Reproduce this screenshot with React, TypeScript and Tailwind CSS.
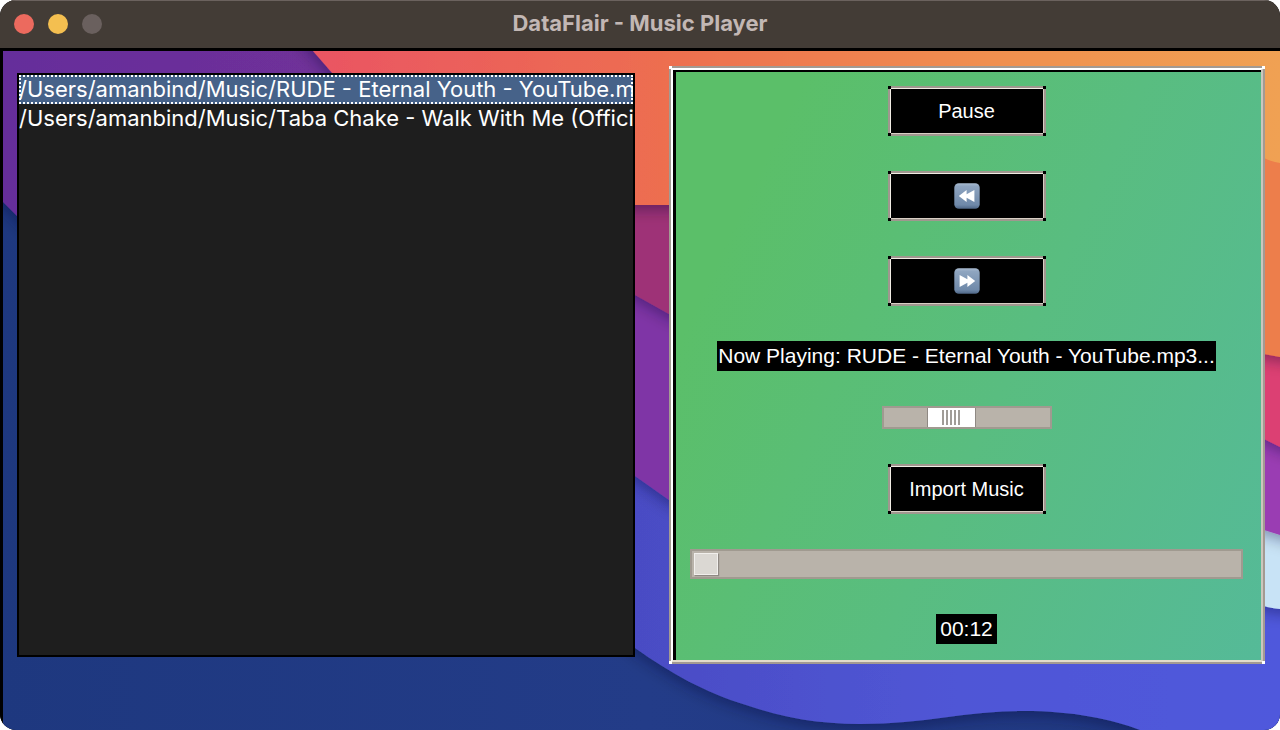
import { useState } from "react";
import type { ReactNode } from "react";

const tracks = [
  "/Users/amanbind/Music/RUDE - Eternal Youth - YouTube.mp3",
  "/Users/amanbind/Music/Taba Chake - Walk With Me (Official Music Video).mp3",
];

function Wallpaper() {
  return (
    <svg
      className="absolute inset-0 h-full w-full"
      viewBox="3 51 1277 679"
      preserveAspectRatio="none"
      aria-hidden="true"
    >
      <defs>
        <linearGradient id="navy" x1="0" x2="1" y1="0" y2="0">
          <stop offset="0" stopColor="#1e387f" />
          <stop offset="0.5" stopColor="#233c88" />
          <stop offset="1" stopColor="#1f3780" />
        </linearGradient>
        <linearGradient id="indigo" gradientUnits="userSpaceOnUse" x1="635" x2="1280" y1="0" y2="0">
          <stop offset="0" stopColor="#4a4cc4" />
          <stop offset="0.5" stopColor="#5056d6" />
          <stop offset="1" stopColor="#5059dc" />
        </linearGradient>
        <linearGradient id="sunset" gradientUnits="userSpaceOnUse" x1="313" x2="1280" y1="0" y2="0">
          <stop offset="0" stopColor="#ea5563" />
          <stop offset="0.36" stopColor="#ed6e50" />
          <stop offset="0.7" stopColor="#f08f4f" />
          <stop offset="1" stopColor="#f0a153" />
        </linearGradient>
        <linearGradient id="violet" gradientUnits="userSpaceOnUse" x1="3" x2="313" y1="0" y2="0">
          <stop offset="0" stopColor="#652d9b" />
          <stop offset="1" stopColor="#6f3099" />
        </linearGradient>
        <filter id="shade" x="-10%" y="-10%" width="120%" height="130%">
          <feDropShadow dx="0" dy="4" stdDeviation="8" floodColor="#100a30" floodOpacity="0.4" />
        </filter>
      </defs>
      <rect x="0" y="40" width="1290" height="700" fill="url(#navy)" />
      <path
        filter="url(#shade)"
        fill="url(#indigo)"
        d="M600 400 L600 622 L635 648 C672 674 704 692 746 705 C784 718 820 724 860 724 C925 724 965 711 1024 711 C1072 711 1112 719 1140 730 L1300 760 L1300 400 Z"
      />
      <path filter="url(#shade)" fill="#c8e3f6" d="M1180 500 L1300 500 L1300 609 L1280 609 Q1270 608 1264 606 L1180 570 Z" />
      <path filter="url(#shade)" fill="#9a3eb3" d="M1180 400 L1300 400 L1300 540 L1280 535 L1264 530 L1180 500 Z" />
      <path filter="url(#shade)" fill="#7f36a6" d="M600 250 L600 452 L635 476 L669 500 L760 540 L760 250 Z" />
      <path filter="url(#shade)" fill="#dc3f73" d="M1180 320 L1300 320 L1300 452 L1280 447 L1264 439 L1180 400 Z" />
      <path filter="url(#shade)" fill="#9e3377" d="M600 150 L600 280 L635 295 L669 314 L760 350 L760 150 Z" />
      <path filter="url(#shade)" fill="url(#violet)" d="M-20 20 L400 20 L400 300 L100 300 L17 216 L3 202 L-20 180 Z" />
      <path filter="url(#shade)" fill="#ed7e4b" d="M1180 100 L1300 100 L1300 358 L1280 357 L1264 354 L1180 340 Z" />
      <path fill="url(#sunset)" filter="url(#shade)" d="M285 20 L313 51 L333 74 L450 205 L760 205 L1180 120 L1200 51 L1200 20 Z" />
      <path fill="url(#sunset)" d="M1100 20 L1100 120 L1180 120 L1264 158 Q1272 162 1280 163 L1300 164 L1300 20 Z" />
    </svg>
  );
}

function Corners({ white = false }: { white?: boolean }) {
  const tone = white ? "bg-white" : "bg-black";
  return (
    <>
      <span className={`absolute -top-0.5 -left-0.5 size-[3px] ${tone}`} />
      <span className={`absolute -top-0.5 -right-0.5 size-[3px] ${tone}`} />
      <span className={`absolute -bottom-0.5 -left-0.5 size-[3px] ${tone}`} />
      <span className={`absolute -right-0.5 -bottom-0.5 size-[3px] ${tone}`} />
    </>
  );
}

function PlayerButton({
  children,
  label,
  onClick,
}: {
  children: ReactNode;
  label?: string;
  onClick?: () => void;
}) {
  return (
    <button
      type="button"
      aria-label={label}
      onClick={onClick}
      className="relative flex h-[50px] w-[158px] items-center justify-center border-2 border-[#a0978f] bg-black text-xl text-white shadow-[inset_1px_1px_0_#f1ece4,inset_-1px_-1px_0_#d8cec4]"
    >
      {children}
      <Corners />
    </button>
  );
}

function SeekIcon({ back = false }: { back?: boolean }) {
  return (
    <svg viewBox="0 0 26 26" className="size-[26px]" aria-hidden="true">
      <defs>
        <linearGradient id={back ? "tileBack" : "tileNext"} x1="0" x2="0" y1="0" y2="1">
          <stop offset="0" stopColor="#a9bbd0" />
          <stop offset="0.12" stopColor="#8fa5c0" />
          <stop offset="0.85" stopColor="#6f89a9" />
          <stop offset="1" stopColor="#4f6787" />
        </linearGradient>
      </defs>
      <rect x="0.3" y="0.3" width="25.4" height="25.4" rx="4.5" fill={back ? "url(#tileBack)" : "url(#tileNext)"} />
      <path
        fill="#fff"
        d={back ? "M4.8 13 L12.6 7 V11.3 L20.4 7 V19 L12.6 14.7 V19 Z" : "M21.2 13 L13.4 7 V11.3 L5.6 7 V19 L13.4 14.7 V19 Z"}
      />
    </svg>
  );
}

export default function App() {
  const [selected, setSelected] = useState(0);
  const [playing, setPlaying] = useState(true);
  const [volume, setVolume] = useState(37);

  return (
    <div className="flex min-h-screen flex-col overflow-hidden rounded-2xl bg-black font-['Liberation_Sans',Arial,sans-serif]">
      <header className="grid h-12 grid-cols-[1fr_auto_1fr] items-center bg-[#433c36] px-3.5 shadow-[inset_0_1px_0_#6b625e]">
        <div className="flex gap-3.5">
          <button type="button" aria-label="Close" className="size-5 rounded-full bg-[#ec6a5e]" />
          <button type="button" aria-label="Minimize" className="size-5 rounded-full bg-[#f4bf50]" />
          <button type="button" aria-label="Zoom" disabled className="size-5 rounded-full bg-[#6a605e]" />
        </div>
        <h1 className="pb-0.5 font-[Inter,sans-serif] text-[22px] leading-7 font-bold text-[#c2b7b4]">
          DataFlair - Music Player
        </h1>
      </header>

      <main className="relative flex flex-1 flex-col border-t-3 border-l-3 border-black">
        <Wallpaper />
        <div className="relative grid grid-cols-[618fr_596fr] gap-[34px] pt-[15px] pr-[15px] pl-3.5">
          <ul
            role="listbox"
            aria-label="Playlist"
            className="my-[7px] min-w-0 overflow-hidden border-2 border-black bg-[#1e1e1e] font-[Inter,sans-serif] text-[22px] leading-[29px] text-white"
          >
            {tracks.map((track, i) => (
              <li
                key={track}
                role="option"
                aria-selected={i === selected}
                onClick={() => setSelected(i)}
                className={
                  i === selected
                    ? "h-[29px] overflow-hidden bg-[#466289] whitespace-nowrap outline-2 -outline-offset-2 outline-white outline-dotted"
                    : "h-[29px] overflow-hidden whitespace-nowrap"
                }
              >
                {track}
              </li>
            ))}
          </ul>

          <section
            aria-label="Player"
            className="relative border-2 border-[#a39a92] bg-[#c9c3ba]"
          >
            <div className="h-full border-2 border-t-white border-r-[#cbc6bd] border-b-[#e2dccb] border-l-white">
              <div className="flex h-full flex-col items-center gap-[35px] border-t-2 border-l-3 border-black bg-[linear-gradient(115deg,#5bbf69_15%,#59bd80_55%,#55ba98_100%)] pt-3.5 pr-[18px] pb-4 pl-3.5">
                <PlayerButton onClick={() => setPlaying(!playing)}>{playing ? "Pause" : "Play"}</PlayerButton>
                <PlayerButton label="Previous">
                  <SeekIcon back />
                </PlayerButton>
                <PlayerButton label="Next">
                  <SeekIcon />
                </PlayerButton>
                <p className="bg-black px-px text-[21px] leading-[30px] whitespace-nowrap text-white">
                  Now Playing: RUDE - Eternal Youth - YouTube.mp3...
                </p>
                <input
                  type="range"
                  aria-label="Volume"
                  min={0}
                  max={100}
                  value={volume}
                  onChange={(e) => setVolume(Number(e.target.value))}
                  className="h-[23px] w-[170px] appearance-none border-2 border-[#a09a90] bg-[#b9b3aa] [&::-webkit-slider-thumb]:h-[19px] [&::-webkit-slider-thumb]:w-[49px] [&::-webkit-slider-thumb]:appearance-none [&::-webkit-slider-thumb]:border-x [&::-webkit-slider-thumb]:border-[#8f8983] [&::-webkit-slider-thumb]:bg-white [&::-webkit-slider-thumb]:bg-[repeating-linear-gradient(90deg,#a09c97_0px,#a09c97_2px,#fff_2px,#fff_4px)] [&::-webkit-slider-thumb]:bg-[length:18px_15px] [&::-webkit-slider-thumb]:bg-center [&::-webkit-slider-thumb]:bg-no-repeat"
                />
                <PlayerButton>Import Music</PlayerButton>
                <progress
                  aria-label="Track progress"
                  max={100}
                  value={4.4}
                  className="h-[30px] w-full appearance-none border-2 border-[#a09a90] bg-[#b9b3aa] p-0.5 [&::-webkit-progress-bar]:bg-[#b9b3aa] [&::-webkit-progress-value]:border [&::-webkit-progress-value]:border-[#f1efec] [&::-webkit-progress-value]:bg-[#dbd8d3] [&::-webkit-progress-value]:shadow-[1px_1px_1px_#8f8983]"
                />
                <time className="bg-black px-1 text-[21px] leading-[30px] text-white">00:12</time>
              </div>
            </div>
            <Corners white />
          </section>
        </div>
      </main>
    </div>
  );
}
